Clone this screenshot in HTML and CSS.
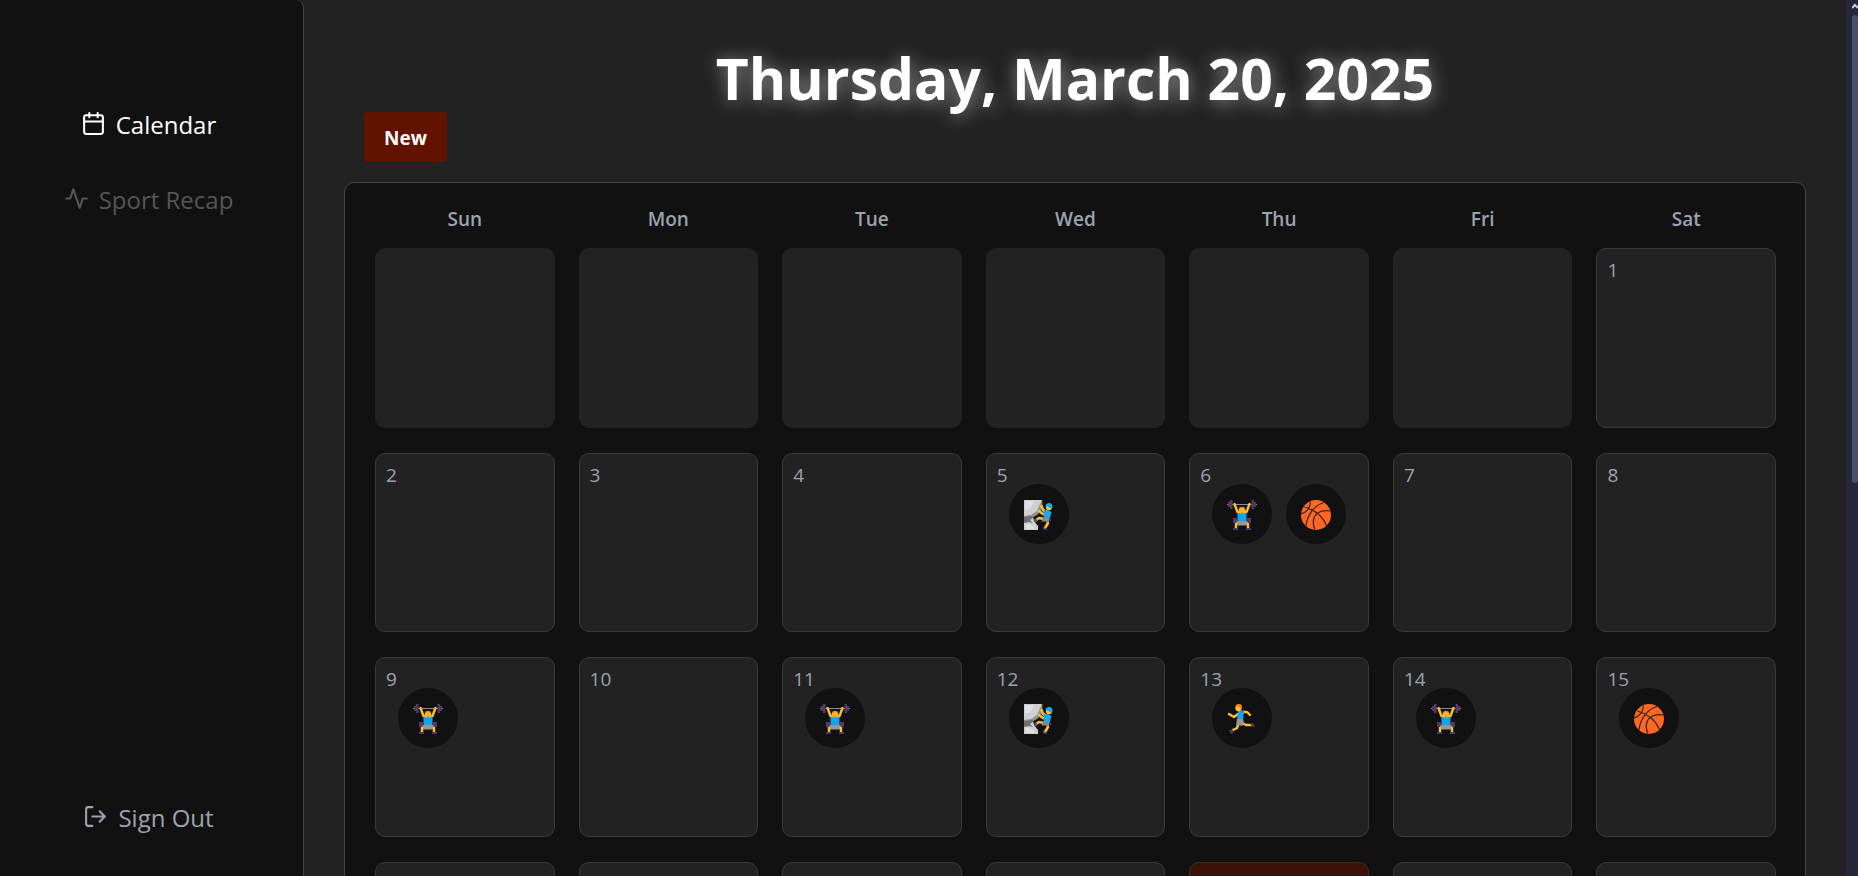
FILE: index.html
```html
<!DOCTYPE html>
<html lang="en">
<head>
<meta charset="utf-8">
<title>Calendar</title>
<link rel="stylesheet" href="styles.css">
</head>
<body>
<svg class="sprite" aria-hidden="true">
  <symbol id="climb" viewBox="0 0 30 30">
    <path fill="#cfcfd2" d="M0 0h18l-1 9-3 5-5 3 1 4 4 5v4H0z"/>
    <path fill="#909095" d="M0 16l7-1 6-4 3-7 2-2-1 8-3 4-5 3-9 2z"/>
    <path fill="#6f6f74" d="M0 17l8-1 2 1-4 3 3 3-4-1-5 1z"/>
    <path fill="#e2e2e5" d="M1 1h9L8 6l-4 3-3 1zM2 24l5 1 3 2v2H2z"/>
    <path fill="none" stroke="#6f8a3c" d="M18 0v8"/>
    <path fill="none" stroke="#ffc02e" stroke-width="2.600" stroke-linecap="round" stroke-linejoin="round" d="M23 12l-4-2-1.500-4M22 14l-3 0-4-3M20 19l-5-1-3 2M23 19l1 4-3 5"/>
    <path fill="#1ba8f0" d="M20 10l4 0 3.500 2-2 7h-5l-1-3z"/>
    <path fill="#87868c" d="M19 17.500l6.500 1-1 4-3-1-4 0z"/>
    <circle cx="25" cy="7" r="3.200" fill="#ffc02e"/>
    <path fill="#1ba8f0" d="M21.500 6c1-4 7-4 7 1l-1 2-3-2z"/>
    <path fill="#66508f" d="M10 19h3v3l-2 0zM19 27l3 1 1 2-4-1zM25 18l2.500 2-1.500 1.500z"/>
  </symbol>
  <symbol id="lift" viewBox="0 0 30 30">
    <path stroke="#8d8d91" stroke-width="1" d="M0 4.500h30"/>
    <path fill="#523a66" d="M1 2h2V0h2.500v9H3V7H1zM24.500 0h2.500v2h2v5h-2v2h-2.500z"/>
    <path fill="none" stroke="#ffc02e" stroke-width="2.400" stroke-linecap="round" stroke-linejoin="round" d="M7.500 4l3 8 3 1M22.500 4l-3 8-3 1"/>
    <circle cx="15" cy="10.500" r="3.300" fill="#ffb52e"/>
    <path fill="#eb8f00" d="M12 9c0-3 6-3 6 0l-3-1zM14 12h2v1h-2z"/>
    <path fill="#0fa6ec" d="M10.500 12.500l3 1h3l3-1v9h-9z"/>
    <path fill="#523a66" d="M6 18h5v5H6zM19 18h5v5h-5z"/>
    <rect x="9" y="21" width="12" height="4.500" rx="2" fill="#96979b"/>
    <path stroke="#ffc02e" stroke-width="2.400" d="M9 23v5M21 23v5"/>
    <path fill="#523a66" d="M6 28h5v2H6zM19 28h5v2h-5z"/>
  </symbol>
  <symbol id="ball" viewBox="0 0 30 30">
    <circle cx="15" cy="15" r="15" fill="#ff6723"/>
    <path fill="none" stroke="#2d2424" stroke-width="1.200" d="M3.500 7C14 10 22 17 25.500 25.500M9 1.500C10 7 6 12 0 14M5 26C6 16 13 5 23 2.500M14 29.500C9 18 15 9 30 11"/>
  </symbol>
  <symbol id="run" viewBox="0 0 30 30">
    <path fill="none" stroke="#ffc02e" stroke-width="2.400" stroke-linecap="round" stroke-linejoin="round" d="M11 10l-4 3-5-3M16 8l4 0 3 3M12 19l-2 5-4 2M15 19l4 2 5 0"/>
    <path fill="#1f9cf0" d="M11 6.500l6 0-1 10-6 0z"/>
    <path fill="#96979b" d="M10 15h6l1 4-2 3-3-1-3 1z"/>
    <circle cx="11.500" cy="4" r="3.200" fill="#ffc02e"/>
    <path fill="#ef7b18" d="M8.500 2c1-3 6.500-3 6.500 1l-1 3-1-3z"/>
    <path fill="#523a66" d="M2 26l4 0 1 2-3 2zM23 20l3-1 2 4-2 0z"/>
  </symbol>
</svg>

<div class="app">
  <aside class="sidebar">
    <nav class="nav">
      <a class="nav-link active" href="#calendar">
        <svg class="icon" viewBox="0 0 24 24"><rect x="3" y="4" width="18" height="18" rx="2"/><path d="M16 2v4M8 2v4M3 10h18"/></svg>
        Calendar
      </a>
      <a class="nav-link dim" href="#recap">
        <svg class="icon" viewBox="0 0 24 24"><path d="M22 12h-4l-3 9L9 3l-3 9H2"/></svg>
        Sport Recap
      </a>
    </nav>
    <button class="nav-link" type="button">
      <svg class="icon" viewBox="0 0 24 24"><path d="M9 21H5a2 2 0 0 1-2-2V5a2 2 0 0 1 2-2h4M16 17l5-5-5-5M21 12H9"/></svg>
      Sign Out
    </button>
  </aside>

  <main class="main">
    <h1 class="title">Thursday, March 20, 2025</h1>
    <button class="new-button" type="button">New</button>
    <section class="calendar">
      <div class="weekdays">
        <span>Sun</span><span>Mon</span><span>Tue</span><span>Wed</span><span>Thu</span><span>Fri</span><span>Sat</span>
      </div>
      <div class="days">
        <div class="day blank"></div>
        <div class="day blank"></div>
        <div class="day blank"></div>
        <div class="day blank"></div>
        <div class="day blank"></div>
        <div class="day blank"></div>
        <div class="day"><span class="date">1</span></div>

        <div class="day"><span class="date">2</span></div>
        <div class="day"><span class="date">3</span></div>
        <div class="day"><span class="date">4</span></div>
        <div class="day"><span class="date">5</span><div class="sports"><span class="sport"><svg><use href="#climb"/></svg></span></div></div>
        <div class="day"><span class="date">6</span><div class="sports"><span class="sport"><svg><use href="#lift"/></svg></span><span class="sport"><svg><use href="#ball"/></svg></span></div></div>
        <div class="day"><span class="date">7</span></div>
        <div class="day"><span class="date">8</span></div>

        <div class="day"><span class="date">9</span><div class="sports"><span class="sport"><svg><use href="#lift"/></svg></span></div></div>
        <div class="day"><span class="date">10</span></div>
        <div class="day"><span class="date">11</span><div class="sports"><span class="sport"><svg><use href="#lift"/></svg></span></div></div>
        <div class="day"><span class="date">12</span><div class="sports"><span class="sport"><svg><use href="#climb"/></svg></span></div></div>
        <div class="day"><span class="date">13</span><div class="sports"><span class="sport"><svg><use href="#run"/></svg></span></div></div>
        <div class="day"><span class="date">14</span><div class="sports"><span class="sport"><svg><use href="#lift"/></svg></span></div></div>
        <div class="day"><span class="date">15</span><div class="sports"><span class="sport"><svg><use href="#ball"/></svg></span></div></div>

        <div class="day"></div>
        <div class="day"></div>
        <div class="day"></div>
        <div class="day"></div>
        <div class="day today"></div>
        <div class="day"></div>
        <div class="day"></div>
      </div>
    </section>
  </main>

  <div class="scrollbar" aria-hidden="true">
    <svg class="scroll-arrow" viewBox="0 0 6 6"><path d="M0 5l3-3 3 3"/></svg>
    <div class="scroll-thumb"></div>
  </div>
</div>
</body>
</html>
```
FILE: styles.css
```css
* {
  box-sizing: border-box;
}

body {
  margin: 0;
  background: #222;
  color: #9ca3af;
  font-family: "Open Sans", "Noto Sans", sans-serif;
  font-size: 19px;
}

.sprite {
  display: none;
}

.app {
  display: flex;
  height: 100vh;
  overflow: hidden;
}

.sidebar {
  display: flex;
  flex-direction: column;
  justify-content: space-between;
  flex: none;
  width: 304px;
  padding: 107px 6px 40px 0;
  background: #111;
  border-right: 1px solid #444;
  border-top-right-radius: 8px;
}

.nav {
  display: flex;
  flex-direction: column;
  gap: 39px;
}

.nav-link {
  display: flex;
  align-items: center;
  justify-content: center;
  gap: 10px;
  padding: 0;
  border: 0;
  background: none;
  color: #9ca3af;
  font-family: inherit;
  font-size: 24px;
  line-height: 36px;
  text-decoration: none;
}

.nav-link.active {
  color: #fff;
}

.nav-link.dim {
  color: #555;
}

.icon {
  width: 25px;
  height: 25px;
  margin-bottom: 3px;
  fill: none;
  stroke: currentColor;
  stroke-width: 2;
  stroke-linecap: round;
  stroke-linejoin: round;
}

.main {
  flex: 1;
  min-width: 0;
  padding: 44px 40px 0;
}

.title {
  margin: 0;
  color: #fff;
  font-size: 57px;
  font-weight: 700;
  line-height: 68px;
  text-align: center;
  text-shadow: 1px 2px 18px rgba(255, 255, 255, 0.5);
}

.new-button {
  display: block;
  margin: 0 0 20px 20px;
  padding: 11px 20px 9px;
  border: 0;
  border-radius: 4px;
  background: #611200;
  color: #fff;
  font-family: inherit;
  font-size: 19px;
  font-weight: 700;
  line-height: 30px;
}

.calendar {
  padding: 21px 29px 20px 30px;
  background: #111;
  border: 1px solid #444;
  border-radius: 10px;
}

.weekdays,
.days {
  display: grid;
  grid-template-columns: repeat(7, 1fr);
  column-gap: 24px;
}

.weekdays {
  margin-bottom: 14px;
  font-weight: 600;
  line-height: 30px;
  text-align: center;
}

.days {
  row-gap: 25px;
}

.day {
  aspect-ratio: 1;
  padding: 12px 10px;
  background: #222;
  border: 1px solid #3a3a3a;
  border-radius: 10px;
}

.day.blank {
  border-color: #222;
}

.day.today {
  background: #3a120a;
  border-color: #51261f;
}

.date {
  display: block;
  line-height: 18px;
}

.sports {
  display: flex;
  gap: 14px;
  margin-left: 12px;
}

.sport {
  display: flex;
  align-items: center;
  justify-content: center;
  width: 60px;
  height: 60px;
  padding-top: 2px;
  border-radius: 50%;
  background: #111;
}

.sport svg {
  width: 30px;
  height: 30px;
}

.scrollbar {
  display: flex;
  flex-direction: column;
  align-items: flex-end;
  flex: none;
  width: 12px;
  padding-top: 3px;
  background: #25283a;
}

.scroll-arrow {
  width: 6px;
  height: 6px;
  margin-bottom: 6px;
  fill: none;
  stroke: #ccc;
  stroke-width: 2;
}

.scroll-thumb {
  width: 6px;
  height: 468px;
  border-radius: 3px;
  background: #4a4d66;
}
```
